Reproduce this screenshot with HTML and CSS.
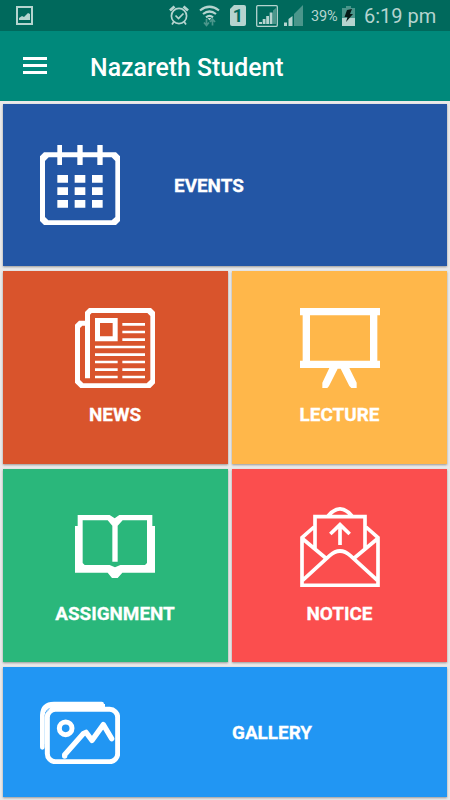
FILE: index.html
```html
<!DOCTYPE html>
<html lang="en">
<head>
<meta charset="utf-8">
<title>Nazareth Student</title>
<link rel="stylesheet" href="styles.css">
</head>
<body>
<div class="status">
  <svg class="shot" width="17" height="19" viewBox="0 0 17 19"><path d="M1 1h15v17H1z" fill="none" stroke="currentColor" stroke-width="2"/><path d="M3 14V12l3-2 2 1 4-4 2 1v6z" fill="currentColor"/></svg>
  <svg class="alarm" width="20" height="20" viewBox="0 0 20 20" fill="none" stroke="currentColor" stroke-width="1.7"><circle cx="10" cy="11" r="7.6"/><path d="M1 5.5 5.5 1.5M14.5 1.5 19 5.5" stroke-width="2.8"/><path d="m6.500 10.500 3 3 5-5M5 16.500l-2 3M15 16.500l2 3"/></svg>
  <svg class="wifi" width="21" height="22" viewBox="0 0 21 22" fill="none" stroke="currentColor"><g stroke-width="2.200"><path d="M1 5.500q9.500-7.500 19 0M4 9q6.500-5 13 0M7 12.300q3.500-2.700 7 0"/></g><path d="M8.500 13h4L10.500 15.500z" fill="currentColor" stroke="none"/><g stroke="#4b968b" stroke-width="1.700"><path d="M7.500 14v6M5 17.500 7.500 20.500 10 17.500M13.500 20.500v-6M11 17l2.500-3L16 17"/></g></svg>
  <span class="sim">1</span>
  <svg class="sig-a" width="22" height="22" viewBox="0 0 22 22"><rect x=".7" y=".7" width="20.600" height="20.600" rx="1" fill="none" stroke="currentColor" stroke-width="1.300"/><path d="M3 17h3v2H3zM6.700 14h2.800v5H6.700zM10.200 11H13v8h-2.800zM13.700 7.500h2.800V19h-2.800z" fill="currentColor"/><path d="M17 5.500 20 3v16h-3z" fill="#4b968b"/></svg>
  <svg class="sig-b" width="21" height="21" viewBox="0 0 21 21"><path d="M1 17.500h3V21H1zM5.500 14l4-3v10h-4z" fill="currentColor"/><path d="M11 9 20 0v21h-9z" fill="#4b968b"/></svg>
  <span class="percent">39%</span>
  <svg class="battery" width="13" height="20" viewBox="0 0 13 20"><path d="M4 0h5v2h4v18H0V2h4z" fill="#4b968b"/><path d="M0 12h13v8H0z" fill="currentColor"/><path d="m5 4 5-1-2 5h3l-7 8 1.500-5H2.500z" fill="#061a17"/></svg>
  <span class="clock">6:19 pm</span>
</div>
<header class="toolbar">
  <div class="menu"><i></i><i></i><i></i></div>
  <h1>Nazareth Student</h1>
</header>
<main class="grid">
  <section class="card wide events">
    <svg class="icon" viewBox="0 0 240 240" fill="#fff"><path fill-rule="evenodd" d="M12 22H228L240 34V228L228 240H12L0 228V34zM26 37 15 48V216L25 226H215L226 216V48L215 37z"/><path d="M52 0h14v60H52zM112 0h16v60h-16zM172 0h16v60h-16zM52 90h32v23H52zM104 90h32v23h-32zM156 90h32v23h-32zM52 127h32v23H52zM104 127h32v23h-32zM156 127h32v23h-32zM52 165h32v23H52zM104 165h32v23h-32zM156 165h32v23h-32z"/></svg>
    <h2>EVENTS</h2>
  </section>
  <section class="card news">
    <svg class="icon" viewBox="0 0 240 240" fill="#fff"><path fill-rule="evenodd" d="M42 0H228L240 12V226L226 240H16L0 224V50L12 38H30V12zM50 15 45 20V211H30V53H22L15 60V216L25 226H215L226 215V24L217 15z"/><path fill-rule="evenodd" d="M60 30h68v70H60zM75 45v40h38V45z"/><path d="M142 45h68v8h-68zM142 68h68v8h-68zM142 91h68v8h-68zM60 113h150v8H60zM60 136h150v8H60zM60 158h68v8H60zM142 158h68v8h-68zM60 181h68v8H60zM142 181h68v8h-68zM60 203h68v8H60zM142 203h68v8h-68z"/></svg>
    <h2>NEWS</h2>
  </section>
  <section class="card lecture">
    <svg class="icon" viewBox="0 0 240 240" fill="#fff"><path fill-rule="evenodd" d="M0 0h240v22h-8v136h8v22h-92l22 44v16h-16l-6-6-26-52h-9l-26 52-5 6H67v-16l21-44H0v-22h8V22H0zM30 22v136h180V22z"/></svg>
    <h2>LECTURE</h2>
  </section>
  <section class="card assignment">
    <svg class="icon" viewBox="0 0 240 240" fill="#fff"><path fill-rule="evenodd" d="M8 24H104L119 34 133 24H232V57H240V197H142L128 213H111L98 197H0V57H8zM23 40V168L29 174H104L120 181 136 174H210L216 168V40H143L128 56V164H112V56L98 40z"/></svg>
    <h2>ASSIGNMENT</h2>
  </section>
  <section class="card notice">
    <svg class="icon" viewBox="0 0 240 240" fill="none" stroke="#fff" stroke-width="11"><path d="M45 130V29H195V130M84 27Q120-16 156 27M42 60 6 92V235H234V92L198 60M5 93 77 153M235 93 163 153M7 221 89 146Q120 118 151 146L233 221"/><path d="M120 114V54M91 81 120 53 149 81"/></svg>
    <h2>NOTICE</h2>
  </section>
  <section class="card wide gallery">
    <svg class="icon" viewBox="0 0 240 240" fill="none" stroke="#fff"><rect x="22" y="76" width="211" height="157" rx="24" stroke-width="15"/><path d="M7 190V94Q8 60 42 60H185" stroke-width="14" stroke-linecap="round"/><path d="M12 82Q20 65 42 65H190V72H45Q23 76 19 99V180" stroke-width="10"/><path d="m17 86 11-11" stroke="#2196f3" stroke-width="2"/><circle cx="77" cy="133" r="19" stroke-width="15"/><path d="M74 216V212L131 148 138 145 156 169 190 122 215 164" stroke-width="16" stroke-linecap="round" stroke-linejoin="round"/></svg>
    <h2>GALLERY</h2>
  </section>
</main>
</body>
</html>
```

FILE: styles.css
```css
* { box-sizing: border-box; }
body { margin: 0; width: 450px; height: 800px; overflow: hidden; background: #e9e9e9; font-family: Roboto, sans-serif; }
.status { display: flex; align-items: flex-start; height: 31px; padding: 6px 0 0 16px; background: #00695c; color: #b5d4cf; }
.status svg { flex: none; }
.alarm { margin-left: 136px; margin-top: -1px; }
.wifi { margin-left: 10px; margin-top: -1px; }
.sim { width: 16px; height: 21px; margin: -1px 0 0 10px; border-radius: 2px; background: #b5d4cf; color: #00695c; font: 700 18px/21px Roboto, sans-serif; text-align: center; clip-path: polygon(4px 0, 100% 0, 100% 100%, 0 100%, 0 4px); }
.sig-a { margin-left: 10px; margin-top: -1px; }
.sig-b { margin-left: 5px; margin-top: -1px; }
.percent { width: 31px; margin-left: 7px; font-size: 14.500px; line-height: 21px; letter-spacing: -.2px; }
.clock { margin: -2px 0 0 9px; font-size: 20px; line-height: 24px; white-space: nowrap; }
.toolbar { display: flex; align-items: center; height: 70px; padding: 3px 0 0 23px; background: #00897b; }
.menu { display: flex; flex-direction: column; gap: 4px; width: 24px; margin-top: -4px; }
.menu i { height: 3px; background: #fff; }
h1 { margin: 1px 0 0 43px; color: #fff; font-size: 24.850px; font-weight: 500; line-height: 30px; }
.grid { display: grid; grid-template-columns: 225px 215px; grid-template-rows: 162px 193px 193px 130px; gap: 5px 4px; padding: 3px; }
.card { display: flex; flex-direction: column; align-items: center; box-shadow: 0 1px 2px #999; }
.wide { grid-column: 1 / 3; flex-direction: row; padding-left: 37px; }
.news, .assignment { padding-right: 1px; }
.icon { display: block; width: 80px; height: 80px; flex: none; margin-top: 37px; }
.assignment .icon, .notice .icon { margin-top: 38px; }
.wide .icon { margin-top: 0; }
.wide.gallery .icon { margin-top: -17px; }
h2 { margin: 15px 0 0; color: #fff; font-size: 18.900px; font-weight: 700; line-height: 24px; -webkit-text-stroke: .3px #fff; }
.wide h2 { margin: 1px 0 0 54px; }
.gallery h2 { margin-left: 112px; }
.events { background: #2356a5; }
.news { background: #d9542c; }
.lecture { background: #ffb74a; }
.assignment { background: #2ab77b; }
.notice { background: #fb4e4e; }
.gallery { background: #2196f3; }
```
